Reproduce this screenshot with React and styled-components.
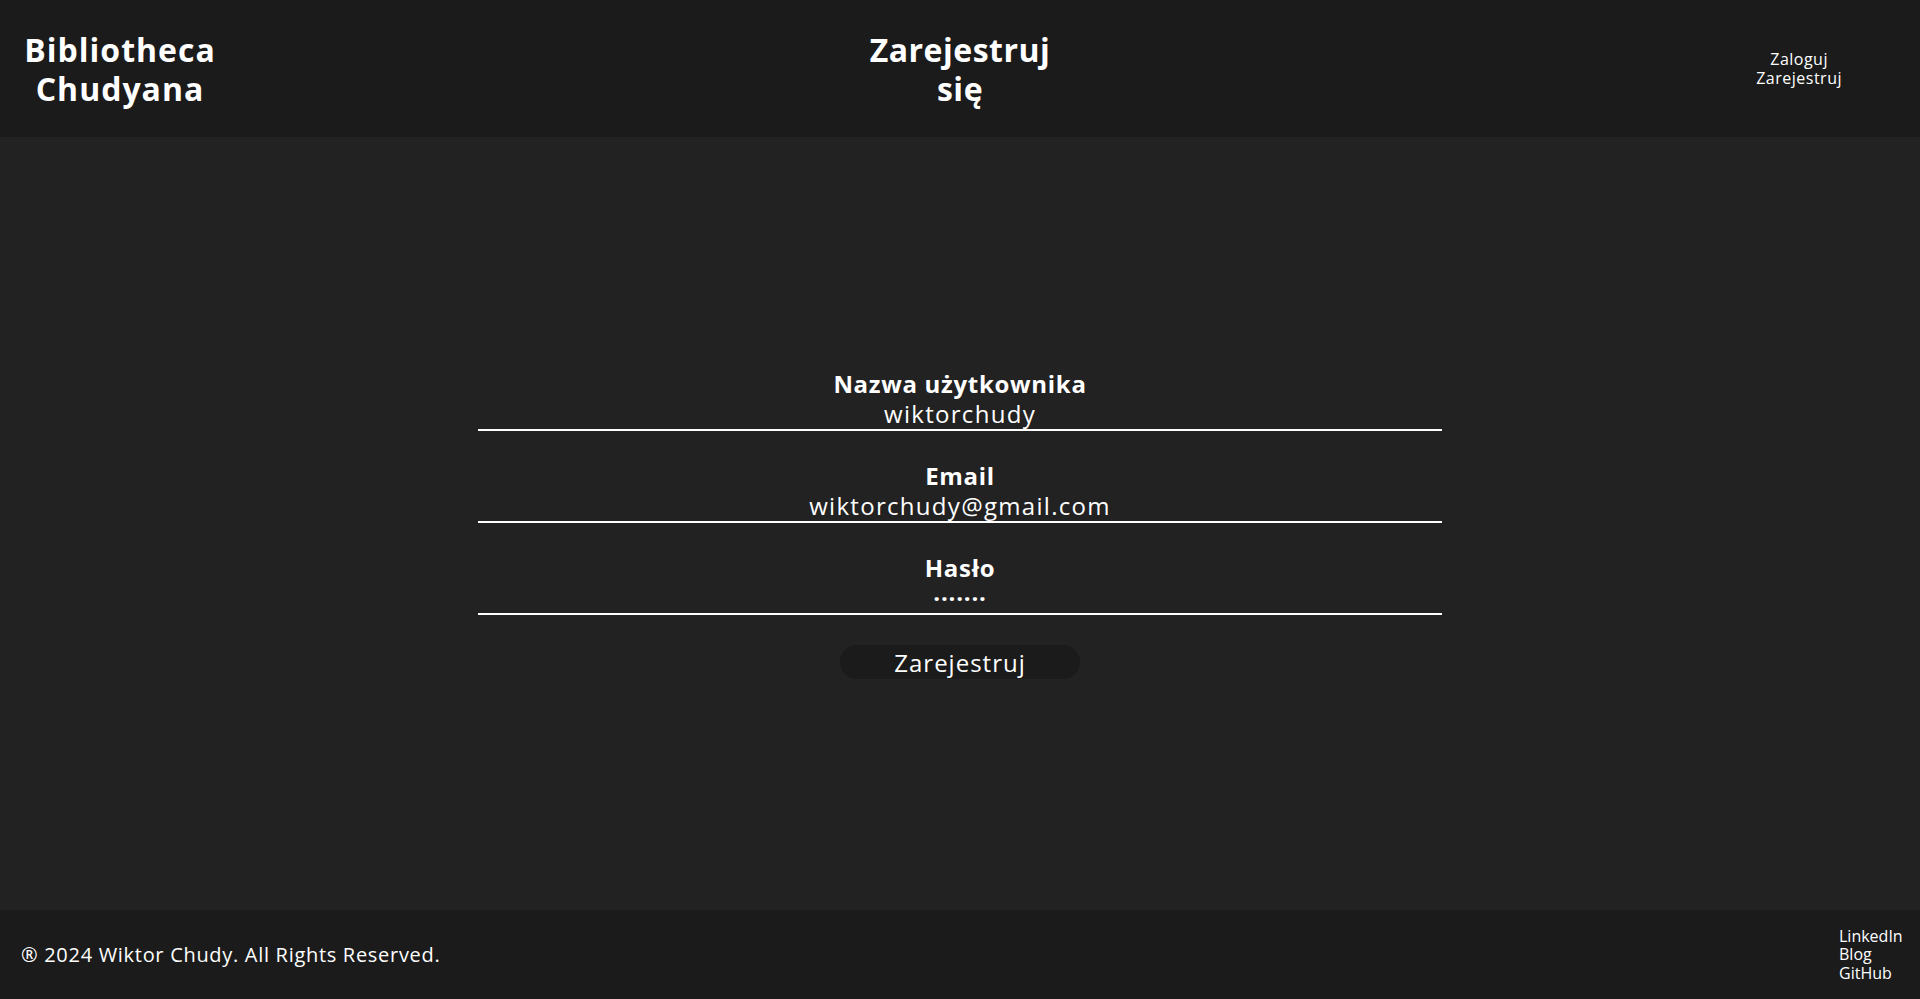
import React from "react";
import styled, { createGlobalStyle } from "styled-components";

const Global = createGlobalStyle`
	* { box-sizing: border-box; }
	body {
		margin: 0;
		background: #222222;
		color: #ffffff;
		font-family: "Open Sans", "DejaVu Sans", sans-serif;
	}
`;

const Page = styled.div`
	min-height: 100vh;
	display: flex;
	flex-direction: column;
`;

const Header = styled.header`
	height: 137px;
	background: #1b1b1b;
	display: grid;
	grid-template-columns: 1fr auto 1fr;
	align-items: center;
	padding: 0 24px;
`;

const Logo = styled.div`
	justify-self: start;
	font-size: 32px;
	font-weight: 700;
	line-height: 39px;
	letter-spacing: 1px;
	text-align: center;
	width: 192px;
`;

const Title = styled.h1`
	margin: 0;
	width: 200px;
	font-size: 32px;
	font-weight: 700;
	line-height: 39px;
	letter-spacing: 0.5px;
	text-align: center;
`;

const Nav = styled.nav`
	justify-self: end;
	margin-right: 54px;
	display: flex;
	flex-direction: column;
	align-items: center;
	font-size: 16px;
	line-height: 19px;
	letter-spacing: 0.5px;
`;

const Main = styled.main`
	flex: 1;
	display: flex;
	align-items: center;
	justify-content: center;
`;

const Form = styled.form`
	width: 964px;
	display: flex;
	flex-direction: column;
	align-items: center;
	gap: 30px;
`;

const Field = styled.label`
	width: 100%;
	display: flex;
	flex-direction: column;
	align-items: center;
	border-bottom: 2px solid #ffffff;
`;

const Label = styled.span`
	font-size: 24px;
	font-weight: 700;
	line-height: 30px;
	letter-spacing: 0.7px;
`;

const Value = styled.span`
	font-size: 24px;
	line-height: 30px;
	letter-spacing: ${(p) => (p.$dots ? "0.8px" : "1.3px")};
	font-weight: ${(p) => (p.$dots ? 700 : 400)};
`;

const Button = styled.button`
	width: 240px;
	height: 34px;
	border: none;
	border-radius: 17px;
	background: #1b1b1b;
	color: #ffffff;
	font-family: inherit;
	font-size: 24px;
	letter-spacing: 1px;
`;

const Footer = styled.footer`
	height: 89px;
	background: #1b1b1b;
	display: flex;
	align-items: center;
	justify-content: space-between;
	padding: 0 22px 0 21px;
`;

const Copy = styled.p`
	margin: 0;
	font-size: 20px;
	letter-spacing: 0.7px;
`;

const Links = styled.div`
	display: flex;
	flex-direction: column;
	font-size: 16px;
	line-height: 18.5px;
	width: 59px;
`;

const fields = [
	{ label: "Nazwa użytkownika", value: "wiktorchudy" },
	{ label: "Email", value: "wiktorchudy@gmail.com" },
	{ label: "Hasło", value: "·······", dots: true },
];

export default function App() {
	return (
		<Page>
			<Global />
			<Header>
				<Logo>Bibliotheca Chudyana</Logo>
				<Title>Zarejestruj się</Title>
				<Nav>
					<span>Zaloguj</span>
					<span>Zarejestruj</span>
				</Nav>
			</Header>
			<Main>
				<Form onSubmit={(e) => e.preventDefault()}>
					{fields.map((f) => (
						<Field key={f.label}>
							<Label>{f.label}</Label>
							<Value $dots={f.dots}>{f.value}</Value>
						</Field>
					))}
					<Button type="submit">Zarejestruj</Button>
				</Form>
			</Main>
			<Footer>
				<Copy>® 2024 Wiktor Chudy. All Rights Reserved.</Copy>
				<Links>
					<span>LinkedIn</span>
					<span>Blog</span>
					<span>GitHub</span>
				</Links>
			</Footer>
		</Page>
	);
}
